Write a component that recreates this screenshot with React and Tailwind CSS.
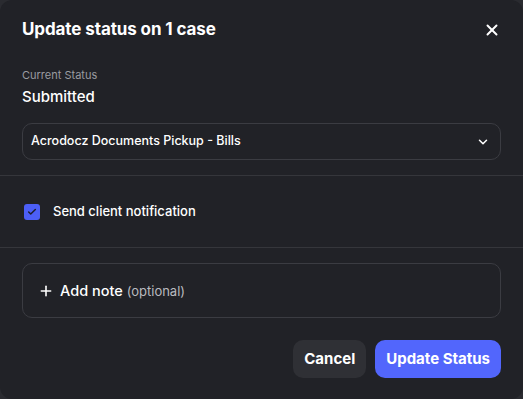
import React, { useState } from 'react'
import { X, ChevronDown, Plus, Check } from 'lucide-react'

const App = () => {
	const [notify, setNotify] = useState(true)

	return (
		<div className="w-[523px] h-[399px] bg-[#2a2b30] font-['Inter',sans-serif] text-white">
			<div className="w-full h-full bg-[#212227] rounded-xl flex flex-col">

				{/* HEADER */}
				<div className="flex items-center justify-between px-[22px] h-[60px]">
					<h2 className="text-[17px] font-bold tracking-[-0.1px]">Update status on 1 case</h2>
					<button className="text-white">
						<X size={18} strokeWidth={2.6} />
					</button>
				</div>

				{/* STATUS */}
				<div className="px-[22px] pt-[8px]">
					<p className="text-[11px] text-[#9a9ba0] leading-[14px]">Current Status</p>
					<p className="text-[15px] font-medium leading-[20px] mt-[5px]">Submitted</p>
					<button className="mt-[16px] w-full h-[37px] flex items-center justify-between pl-[8px] pr-[10px] border border-[#3b3c42] rounded-[10px] text-[12.5px] font-medium">
						<span>Acrodocz Documents Pickup - Bills</span>
						<ChevronDown size={14} strokeWidth={2.6} />
					</button>
				</div>

				<div className="mt-[15px] border-t border-[#35363b]" />

				{/* NOTIFICATION */}
				<label className="flex items-center h-[71px] px-[24px] gap-[13px] text-[13px] font-medium">
					<span
						onClick={() => setNotify(!notify)}
						className={`w-4 h-4 rounded-[3px] flex items-center justify-center ${notify ? 'bg-[#4c5ff7]' : 'border border-[#55565c]'}`}
					>
						{notify && <Check size={10} strokeWidth={3.5} className="text-[#1d1e2e]" />}
					</span>
					Send client notification
				</label>

				<div className="border-t border-[#35363b]" />

				{/* NOTE */}
				<div className="px-[22px] pt-[15px]">
					<button className="w-full h-[55px] flex items-center gap-[6px] px-[15px] border border-[#3b3c42] rounded-[10px]">
						<Plus size={16} strokeWidth={2.4} />
						<span className="text-[14.5px] font-medium">
							Add note <span className="text-[13px] font-normal text-[#b9babf]">(optional)</span>
						</span>
					</button>
				</div>

				{/* ACTIONS */}
				<div className="flex justify-end gap-[9px] px-[22px] mt-[22px]">
					<button className="h-[38px] px-[11px] rounded-[10px] bg-[#2f3035] text-[15px] font-bold">Cancel</button>
					<button className="h-[38px] px-[11px] rounded-[10px] bg-[#5266fc] text-[15px] font-bold">Update Status</button>
				</div>
			</div>
		</div>
	)
}

export default App
